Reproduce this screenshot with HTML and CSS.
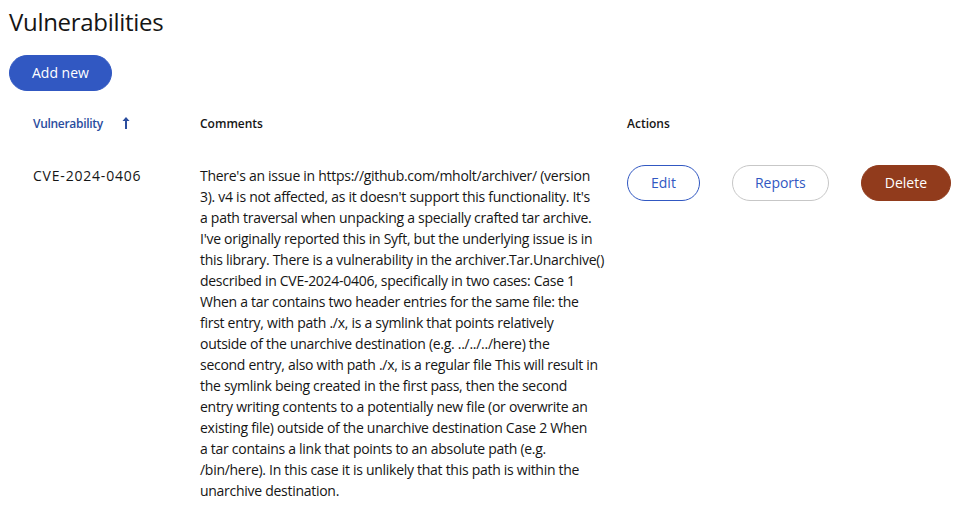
FILE: index.html
```html
<!DOCTYPE html>
<html lang="en">
<head>
<meta charset="utf-8">
<title>Vulnerabilities</title>
<link rel="stylesheet" href="styles.css">
</head>
<body>
<main class="page">
  <h1 class="title">Vulnerabilities</h1>
  <div class="toolbar">
    <button class="btn btn-primary" type="button">Add new</button>
  </div>
  <table class="table">
    <colgroup>
      <col class="col-name">
      <col class="col-comments">
      <col class="col-actions">
    </colgroup>
    <thead>
      <tr>
        <th class="th-sort">
          <span class="sort-label">Vulnerability</span>
          <svg class="sort-icon" width="8" height="12" viewBox="0 0 8 12" aria-hidden="true"><path d="M4 0 L7.5 4 H5 V12 H3 V4 H0.5 Z" fill="currentColor"/></svg>
        </th>
        <th>Comments</th>
        <th>Actions</th>
      </tr>
    </thead>
    <tbody>
      <tr>
        <td class="cell-name">CVE-2024-0406</td>
        <td class="cell-comments">There's an issue in https://github.com/mholt/archiver/ (version<br>3). v4 is not affected, as it doesn't support this functionality. It's<br>a path traversal when unpacking a specially crafted tar archive.<br>I've originally reported this in Syft, but the underlying issue is in<br>this library. There is a vulnerability in the archiver.Tar.Unarchive()<br>described in CVE-2024-0406, specifically in two cases: Case 1<br>When a tar contains two header entries for the same file: the<br>first entry, with path ./x, is a symlink that points relatively<br>outside of the unarchive destination (e.g. ../../../here) the<br>second entry, also with path ./x, is a regular file This will result in<br>the symlink being created in the first pass, then the second<br>entry writing contents to a potentially new file (or overwrite an<br>existing file) outside of the unarchive destination Case 2 When<br>a tar contains a link that points to an absolute path (e.g.<br>/bin/here). In this case it is unlikely that this path is within the<br>unarchive destination.</td>
        <td class="cell-actions">
          <div class="actions">
            <button class="btn btn-secondary" type="button">Edit</button>
            <button class="btn btn-tertiary" type="button">Reports</button>
            <button class="btn btn-danger" type="button">Delete</button>
          </div>
        </td>
      </tr>
    </tbody>
  </table>
</main>
</body>
</html>
```
FILE: styles.css
```css
* { box-sizing: border-box; }
html, body { margin: 0; padding: 0; background: #fff; }
body {
  font-family: "Open Sans", "Liberation Sans", sans-serif;
  color: #151515;
  font-size: 14px;
}
.page { padding: 6px 9px 0 9px; }
.title {
  margin: 0;
  font-size: 24px;
  line-height: 31px;
  font-weight: 500;
  color: #151515;
  letter-spacing: -0.3px;
}
.toolbar { padding-top: 18px; padding-bottom: 9px; }
.btn {
  font-family: inherit;
  font-size: 14px;
  line-height: 20px;
  height: 36px;
  border-radius: 999px;
  padding: 0 23px;
  cursor: pointer;
  background: #fff;
  border: 1px solid transparent;
}
.btn-primary { background: #3158c2; color: #fff; border-color: #3158c2; padding: 0 22px; }
.btn-secondary { color: #3158c2; border-color: #3158c2; }
.btn-tertiary { color: #3158c2; border-color: #c7c7c7; padding: 0 22px; }
.btn-danger { background: #913b1c; color: #fff; border-color: #913b1c; }
.table { border-collapse: collapse; table-layout: fixed; width: 942px; }
.col-name { width: 175px; }
.col-comments { width: 427px; }
.table th {
  text-align: left;
  font-size: 12px;
  font-weight: 600;
  line-height: 18px;
  padding: 15px 16px 15px 16px;
  color: #151515;
}
.table th:first-child, .table td:first-child { padding-left: 24px; }
.th-sort { color: #2b4d9e; }
.sort-label { color: #2b4d9e; letter-spacing: -0.3px; }
.sort-icon { margin-left: 16px; vertical-align: -1px; color: #2b4d9e; }
.table td {
  vertical-align: top;
  padding: 17px 16px 16px 16px;
  line-height: 21px;
  font-size: 14px;
}
.cell-name { letter-spacing: 0.8px; }
.cell-comments { white-space: nowrap; letter-spacing: -0.28px; }
.cell-actions { padding-top: 16px; }
.actions { display: flex; gap: 32px; }
```
